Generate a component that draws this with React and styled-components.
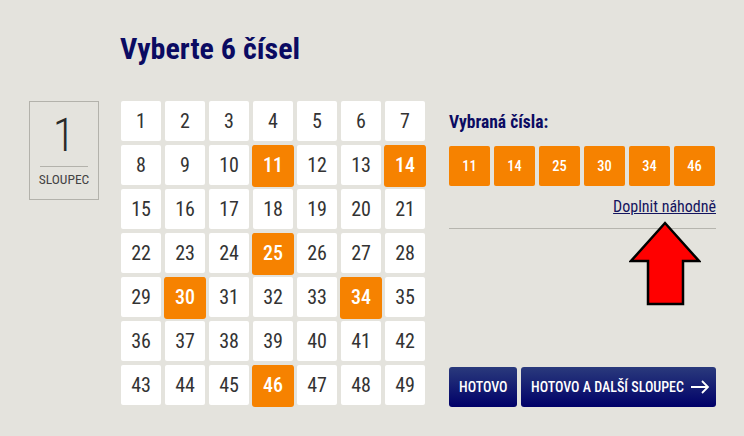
import styled, { createGlobalStyle } from "styled-components";

const GlobalStyle = createGlobalStyle`
  body {
    margin: 0;
    background: #e4e3dd;
    font-family: Roboto, "Noto Sans", sans-serif;
    font-stretch: 75%;
  }
`;

const picked = [11, 14, 25, 30, 34, 46];
const numbers = Array.from({ length: 49 }, (_, i) => i + 1);

const App = () => {
  return (
    <Page>
      <GlobalStyle />
      <Title>Vyberte 6 čísel</Title>
      <Main>
        <Column>
          <ColumnNo>1</ColumnNo>
          <ColumnRule />
          <ColumnLabel>SLOUPEC</ColumnLabel>
        </Column>

        <Grid>
          {numbers.map((n) => (
            <Cell key={n} $active={picked.includes(n)}>
              {n}
            </Cell>
          ))}
        </Grid>

        <Panel>
          <PanelTitle>Vybraná čísla:</PanelTitle>
          <Chips>
            {picked.map((n) => (
              <Chip key={n}>{n}</Chip>
            ))}
          </Chips>
          <Random href="#">Doplnit náhodně</Random>
          <Rule />
          <Arrow width="72" height="86" viewBox="0 0 72 86">
            <polygon
              points="36,2 70,40 54,40 54,83 19,83 19,40 2,40"
              fill="#ff0000"
              stroke="#000"
              strokeWidth="2.5"
              strokeLinejoin="miter"
            />
          </Arrow>
          <Buttons>
            <Button>HOTOVO</Button>
            <Button $wide>
              HOTOVO A DALŠÍ SLOUPEC
              <svg width="20" height="14" viewBox="0 0 20 14">
                <path
                  d="M1 7h17M12 1l6 6-6 6"
                  fill="none"
                  stroke="#fff"
                  strokeWidth="1.8"
                />
              </svg>
            </Button>
          </Buttons>
        </Panel>
      </Main>
    </Page>
  );
};

export default App;

const Page = styled.div`
  width: 744px;
  height: 436px;
  padding-top: 31px;
  box-sizing: border-box;
  overflow: hidden;
`;

const Title = styled.h1`
  margin: 0 0 34px 120px;
  font-size: 30px;
  line-height: 36px;
  font-weight: 700;
  color: #0b0b62;
`;

const Main = styled.div`
  display: flex;
  align-items: flex-start;
  padding-left: 29px;
`;

const Column = styled.div`
  width: 70px;
  height: 99px;
  box-sizing: border-box;
  border: 1px solid #b3b2ab;
  display: flex;
  flex-direction: column;
  align-items: center;
  padding-top: 11px;
  color: #2a2a2a;
`;

const ColumnNo = styled.div`
  font-size: 46px;
  line-height: 45px;
  font-weight: 300;
`;

const ColumnRule = styled.div`
  width: 48px;
  height: 1px;
  background: #b3b2ab;
  margin-top: 8px;
`;

const ColumnLabel = styled.div`
  font-size: 13.5px;
  line-height: 16px;
  margin-top: 4px;
  color: #444;
`;

const Grid = styled.div`
  display: grid;
  grid-template-columns: repeat(7, 40px);
  grid-auto-rows: 40px;
  gap: 4px;
  margin-left: 22px;
`;

const Cell = styled.div`
  display: flex;
  align-items: center;
  justify-content: center;
  border-radius: 2px;
  font-size: 20px;
  background: ${(p) => (p.$active ? "#f68200" : "#fff")};
  color: ${(p) => (p.$active ? "#fff" : "#333")};
  font-weight: ${(p) => (p.$active ? 500 : 400)};
  box-shadow: ${(p) => (p.$active ? "0 1px 0 1px #f68200" : "none")};
`;

const Panel = styled.div`
  position: relative;
  align-self: stretch;
  width: 267px;
  margin-left: 24px;
  padding-top: 11px;
  display: flex;
  flex-direction: column;
`;

const PanelTitle = styled.div`
  font-size: 17.5px;
  line-height: 20px;
  font-weight: 700;
  color: #0b0b62;
`;

const Chips = styled.div`
  display: grid;
  grid-template-columns: repeat(6, 41px);
  gap: 4px;
  margin-top: 14px;
`;

const Chip = styled.div`
  height: 40px;
  display: flex;
  align-items: center;
  justify-content: center;
  background: #f68200;
  border-radius: 2px;
  color: #fff;
  font-size: 14.5px;
  font-weight: 500;
`;

const Random = styled.a`
  align-self: flex-end;
  margin-top: 12px;
  font-size: 16px;
  line-height: 18px;
  color: #14145e;
  text-decoration: underline;
`;

const Rule = styled.div`
  height: 1px;
  background: #b6b5ae;
  margin-top: 12px;
`;

const Arrow = styled.svg`
  position: absolute;
  left: 180px;
  top: 120px;
`;

const Buttons = styled.div`
  display: flex;
  gap: 4px;
  margin-top: auto;
  margin-bottom: -2px;
`;

const Button = styled.button`
  height: 40px;
  width: ${(p) => (p.$wide ? "195px" : "68px")};
  display: flex;
  align-items: center;
  justify-content: space-between;
  gap: 6px;
  padding: 0 9px 0 10px;
  border: none;
  border-radius: 3px;
  background: linear-gradient(#2a3a7c, #000068);
  color: #fff;
  font-family: Roboto, sans-serif;
  font-stretch: 75%;
  font-size: 14px;
  font-weight: 500;
  white-space: nowrap;
  cursor: pointer;

  svg {
    flex: none;
  }
`;
